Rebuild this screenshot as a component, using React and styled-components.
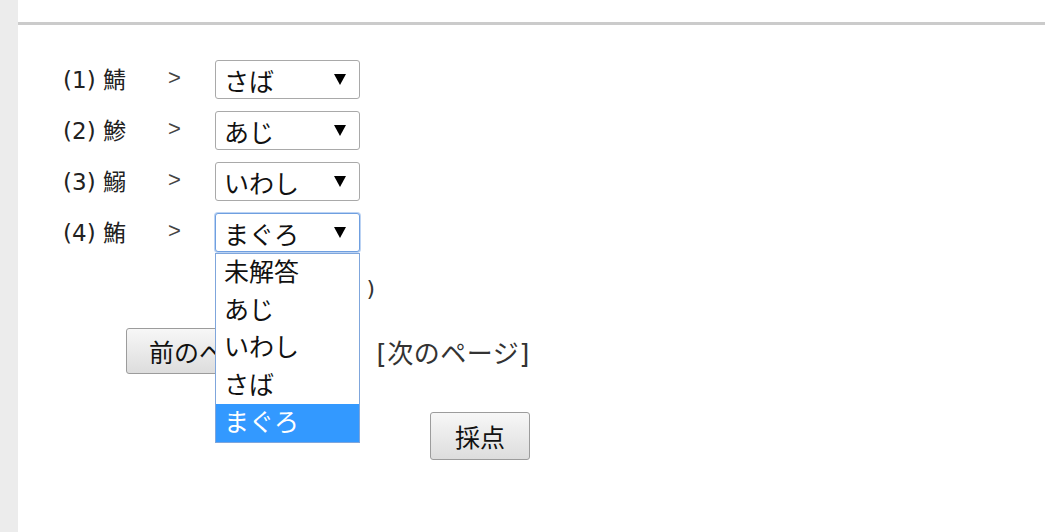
import React from "react";
import styled, { createGlobalStyle } from "styled-components";

const Global = createGlobalStyle`
  html, body {
    margin: 0;
    padding: 0;
    background: #fff;
  }
  body {
    font-family: "DejaVu Sans", "Noto Sans CJK JP", sans-serif;
    color: #222;
  }
`;

const Page = styled.div`
  display: flex;
  height: 532px;
  overflow: hidden;
`;

const Side = styled.div`
  width: 18px;
  background: #ececec;
  flex: none;
`;

const Main = styled.div`
  flex: 1;
  padding-top: 22px;
`;

const Rule = styled.div`
  height: 3px;
  background: #cbcbcb;
`;

const Content = styled.div`
  padding: 35px 0 0 45px;
`;

const Questions = styled.div`
  display: flex;
  flex-direction: column;
  gap: 12px;
`;

const Row = styled.div`
  display: flex;
  align-items: center;
  height: 39px;
`;

const Label = styled.span`
  width: 105px;
  font-size: 23px;
  white-space: nowrap;
  margin-top: -3px;
`;

const Arrow = styled.span`
  width: 47px;
  font-family: "Liberation Sans", sans-serif;
  font-size: 22px;
  color: #444;
  margin-top: -3px;
`;

const SelectWrap = styled.div`
  position: relative;
`;

const Select = styled.div`
  box-sizing: border-box;
  width: 145px;
  height: 39px;
  display: flex;
  align-items: center;
  justify-content: space-between;
  padding: 0 13px 0 8px;
  border: 1px solid ${(p) => (p.$open ? "#6f9fe0" : "#a9a9a9")};
  box-shadow: ${(p) => (p.$open ? "0 0 0 1px #bcd3f3" : "none")};
  border-radius: 3px;
  background: #fff;
  font-size: 25px;
  color: #111;
`;

const List = styled.div`
  position: absolute;
  top: 100%;
  left: 0;
  margin-top: 1px;
  box-sizing: border-box;
  width: 145px;
  border: 1px solid #7fa6dc;
  background: #fff;
  z-index: 5;
`;

const Option = styled.div`
  height: 37.5px;
  line-height: 37px;
  padding-left: 8px;
  font-size: 25px;
  color: ${(p) => (p.$selected ? "#fff" : "#111")};
  background: ${(p) => (p.$selected ? "#3399ff" : "#fff")};
  white-space: nowrap;
`;

const Status = styled.div`
  width: 312px;
  margin-top: 18px;
  text-align: right;
  font-size: 22px;
  color: #333;
  white-space: pre;
`;

const Nav = styled.div`
  display: flex;
  align-items: center;
  margin: 26px 0 0 63px;
`;

const Button = styled.button`
  height: ${(p) => p.$h || 46}px;
  padding: 0 ${(p) => p.$px || 22}px;
  font-family: "DejaVu Sans", "Noto Sans CJK JP", sans-serif;
  font-size: 25px;
  color: #111;
  border: 1px solid #9c9c9c;
  border-radius: 3px;
  background: linear-gradient(#f7f7f7, #dddddd);
  cursor: pointer;
`;

const NextLink = styled.span`
  margin-left: 80px;
  font-size: 26px;
  letter-spacing: 0.5px;
  color: #333;
`;

const Submit = styled.div`
  margin: 38px 0 0 367px;
`;

const Caret = () => (
  <svg width="12" height="11" viewBox="0 0 12 11">
    <polygon points="0,0 12,0 6,11" fill="#000" />
  </svg>
);

const questions = [
  { n: 1, kanji: "鯖", value: "さば" },
  { n: 2, kanji: "鯵", value: "あじ" },
  { n: 3, kanji: "鰯", value: "いわし" },
  { n: 4, kanji: "鮪", value: "まぐろ", open: true },
];

const options = ["未解答", "あじ", "いわし", "さば", "まぐろ"];

const App = () => {
  return (
    <Page>
      <Global />
      <Side />
      <Main>
        <Rule />
        <Content>
          <Questions>
            {questions.map((q) => (
              <Row key={q.n}>
                <Label>({q.n}) {q.kanji}</Label>
                <Arrow>&gt;</Arrow>
                <SelectWrap>
                  <Select $open={q.open}>
                    <span>{q.value}</span>
                    <Caret />
                  </Select>
                  {q.open && (
                    <List>
                      {options.map((o) => (
                        <Option key={o} $selected={o === q.value}>
                          {o}
                        </Option>
                      ))}
                    </List>
                  )}
                </SelectWrap>
              </Row>
            ))}
          </Questions>
          <Status>{"(4問中4問  )"}</Status>
          <Nav>
            <Button>前のページ</Button>
            <NextLink>[次のページ]</NextLink>
          </Nav>
          <Submit>
            <Button $h={48} $px={24}>採点</Button>
          </Submit>
        </Content>
      </Main>
    </Page>
  );
};

export default App;
